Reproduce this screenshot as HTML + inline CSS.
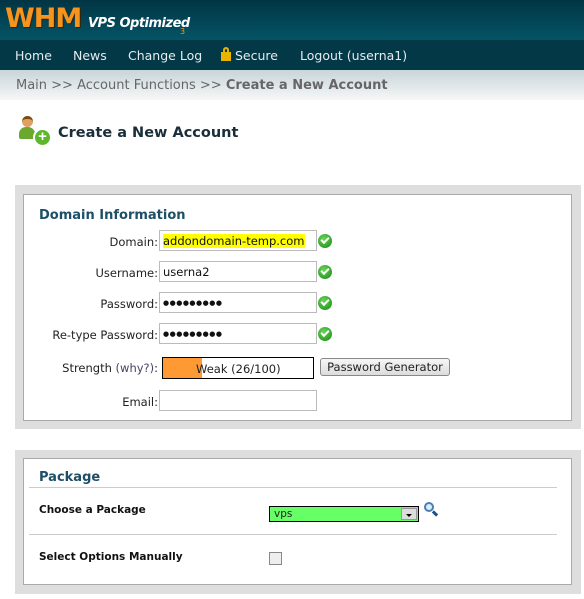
<!DOCTYPE html>
<html><head><style>
*{margin:0;padding:0;box-sizing:border-box}
body{width:584px;height:599px;overflow:hidden;background:#fff;font-family:"DejaVu Sans",Verdana,sans-serif;position:relative;font-size:12px;color:#222}
.a{position:absolute;white-space:nowrap}
.hdr{left:0;top:0;width:584px;height:40px;background:linear-gradient(#013544,#045466)}
.nav{left:0;top:40px;width:584px;height:30px;background:#033847;color:#e4ecef;font-size:12.5px}
.crumb{left:0;top:70px;width:584px;height:30px;background:linear-gradient(#c8d5d9,#f6f7f7);color:#666;font-size:13px}
.gray{background:#dedede}
.box{background:#fff;border:1px solid #aaa}
.lbl{text-align:right;width:150px;left:8px;font-size:11.5px;color:#222}
.inp{border:1px solid #bbb;width:158px;height:21px;left:159px;font-size:11.5px;padding:3px 3px;color:#111}
.ok{width:14px;height:14px;border-radius:50%;background:radial-gradient(circle at 40% 35%,#6bd35a,#138a10);left:318px}
.ok:after{content:"";position:absolute;left:3px;top:3px;width:6px;height:3px;border-left:2px solid #fff;border-bottom:2px solid #fff;transform:rotate(-45deg)}
.dots{font-size:7px;padding-top:6px;letter-spacing:0.5px}
</style></head><body>
<div class="a hdr"></div>
<div class="a" style="left:5px;top:3px;font:bold 27px 'DejaVu Sans',sans-serif;color:#f7941d;letter-spacing:-1px;text-shadow:1px 1px 0 #3a2000">WHM</div>
<div class="a" style="left:88px;top:16px;font:italic bold 13px 'DejaVu Sans',sans-serif;color:#fff;letter-spacing:-0.5px">VPS Optimized</div>
<div class="a" style="left:180px;top:27px;font-size:8px;color:#f7941d">3</div>
<div class="a nav"><span class="a" style="left:15px;top:8px">Home</span><span class="a" style="left:73px;top:8px">News</span><span class="a" style="left:128px;top:8px">Change Log</span>
<span class="a" style="left:221px;top:12px;width:10px;height:9px;background:#e8b400"></span><span class="a" style="left:223px;top:7px;width:6px;height:7px;border:2px solid #e8b400;border-bottom:none;border-radius:3px 3px 0 0"></span>
<span class="a" style="left:235px;top:8px">Secure</span><span class="a" style="left:300px;top:8px">Logout (userna1)</span></div>
<div class="a crumb"><span class="a" style="left:16px;top:8px">Main &gt;&gt; Account Functions &gt;&gt; <b>Create a New Account</b></span></div>
<div class="a" style="left:22px;top:116px;width:11px;height:11px;border-radius:50%;background:#e0a060;border-top:3px solid #7a4a10"></div>
<div class="a" style="left:19px;top:127px;width:16px;height:12px;border-radius:7px 7px 2px 2px;background:#6aa830"></div>
<div class="a" style="left:33px;top:128px;width:19px;height:19px;border-radius:50%;background:#5cb82a;border:2px solid #fff;color:#fff;font:bold 15px/14px sans-serif;text-align:center">+</div>
<div class="a" style="left:58px;top:125px;font-size:14.5px;font-weight:bold;color:#1a2e3a">Create a New Account</div>

<div class="a gray" style="left:15px;top:185px;width:566px;height:244px"></div>
<div class="a box" style="left:23px;top:194px;width:549px;height:227px"></div>
<div class="a" style="left:39px;top:208px;font-size:13px;font-weight:bold;color:#1d4f66">Domain Information</div>
<div class="a lbl" style="top:235px">Domain:</div><div class="a inp" style="top:230px"><span style="background:#ff0">addondomain-temp.com</span></div><div class="a ok" style="top:234px"></div>
<div class="a lbl" style="top:266px">Username:</div><div class="a inp" style="top:261px">userna2</div><div class="a ok" style="top:265px"></div>
<div class="a lbl" style="top:297px">Password:</div><div class="a inp dots" style="top:292px">●●●●●●●●●</div><div class="a ok" style="top:296px"></div>
<div class="a lbl" style="top:328px">Re-type Password:</div><div class="a inp dots" style="top:323px">●●●●●●●●●</div><div class="a ok" style="top:327px"></div>
<div class="a lbl" style="top:361px">Strength <span style="color:#446">(why?)</span>:</div>
<div class="a" style="left:162px;top:357px;width:152px;height:22px;border:1px solid #000"><div style="position:absolute;left:0;top:0;width:39px;height:20px;background:#f93"></div><span style="position:absolute;left:33px;top:4px;font-size:11.5px">Weak (26/100)</span></div>
<div class="a" style="left:320px;top:358px;width:130px;height:18px;border:1px solid #888;border-radius:3px;background:linear-gradient(#f6f6f6,#dcdcdc);font-size:11.5px;text-align:center;line-height:17px">Password Generator</div>
<div class="a lbl" style="top:395px">Email:</div><div class="a inp" style="top:390px"></div>

<div class="a gray" style="left:15px;top:450px;width:566px;height:144px"></div>
<div class="a box" style="left:23px;top:458px;width:549px;height:127px"></div>
<div class="a" style="left:39px;top:470px;font-size:13px;font-weight:bold;color:#1d4f66">Package</div>
<div class="a" style="left:29px;top:487px;width:528px;height:1px;background:#ccc"></div>
<div class="a" style="left:39px;top:504px;font-size:10.5px;font-weight:bold;color:#111">Choose a Package</div>
<div class="a" style="left:269px;top:506px;width:150px;height:16px;border:1px solid #000;background:#6f6;font-size:10.5px;padding-left:4px;line-height:15px">vps<span style="position:absolute;right:1px;top:1px;width:16px;height:12px;background:#ddd;border:1px solid #999"><span style="position:absolute;left:4px;top:5px;border-left:3px solid transparent;border-right:3px solid transparent;border-top:3px solid #000"></span></span></div>
<div class="a" style="left:424px;top:502px;width:10px;height:10px;border:2px solid #4a7fb0;border-radius:50%;background:#dbeefc"></div>
<div class="a" style="left:432px;top:512px;width:6px;height:3px;background:#1d4f8a;transform:rotate(45deg)"></div>
<div class="a" style="left:29px;top:534px;width:528px;height:1px;background:#ccc"></div>
<div class="a" style="left:39px;top:551px;font-size:10.5px;font-weight:bold;color:#111">Select Options Manually</div>
<div class="a" style="left:269px;top:552px;width:13px;height:13px;border:1px solid #888;background:#eee"></div>
</body></html>
